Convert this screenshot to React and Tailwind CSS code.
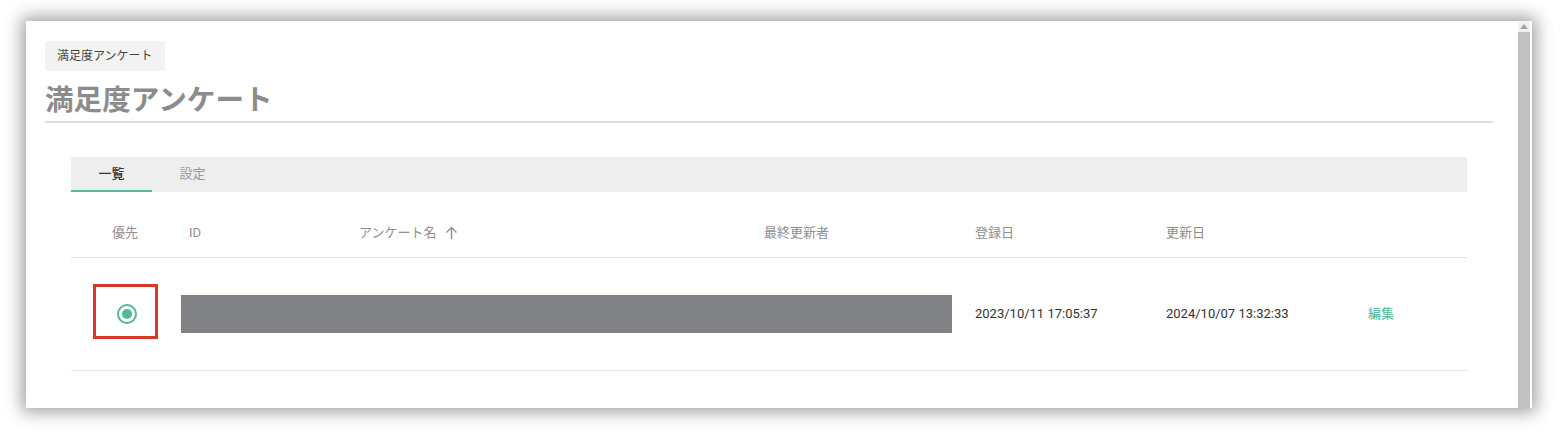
import React from "react";

export default function App() {
  return (
    <div
      className="w-[1562px] h-[436px] bg-white pt-[21px] pl-[26px] overflow-hidden font-['Roboto','Noto_Sans_CJK_JP',sans-serif]"
    >
      <div className="w-[1506px] h-[387px] bg-white flex shadow-[0_0_16px_4px_rgba(0,0,0,0.38)]">
        {/* content */}
        <div className="flex-1 pl-[19px] pr-[25px] pt-[20px]">
          <div className="inline-flex items-center h-[30px] px-[12px] rounded-[4px] bg-[#f3f3f3] text-[12px] text-[#444]">
            満足度アンケート
          </div>
          <div className="mt-[9px] h-[43px] leading-[40px] text-[28.6px] font-bold text-[#8c8c8c] border-b-2 border-[#dddddd]">
            満足度アンケート
          </div>

          <div className="mx-[26px] mt-[34px]">
            {/* tabs */}
            <div className="flex h-[35px] bg-[#eeeeee]">
              <div className="w-[81px] flex items-center justify-center text-[13px] font-medium text-[#333] border-b-2 border-[#5ab9a3]">
                一覧
              </div>
              <div className="w-[81px] flex items-center justify-center text-[13px] text-[#9a9a9a] pb-[2px]">
                設定
              </div>
            </div>

            {/* header */}
            <div className="mt-[17px] flex h-[49px] items-center text-[13px] text-[#8f8f8f] border-b border-[#e2e2e2]">
              <div className="w-[110px] flex justify-center pr-[2px]">優先</div>
              <div className="w-[170px] pl-[8px]">ID</div>
              <div className="w-[405px] pl-[8px] flex items-center gap-[9px]">
                アンケート名
                <svg width="13" height="14" viewBox="0 0 13 14" fill="none" stroke="#8f8f8f" strokeWidth="1.4">
                  <path d="M6.5 13V1.5M1.5 6.5L6.5 1.5L11.5 6.5" />
                </svg>
              </div>
              <div className="w-[211px] pl-[8px]">最終更新者</div>
              <div className="w-[191px] pl-[8px]">登録日</div>
              <div className="w-[202px] pl-[8px]">更新日</div>
              <div className="flex-1 pl-[8px]"></div>
            </div>

            {/* row */}
            <div className="flex h-[113px] items-center text-[13px] text-[#333] border-b border-[#e6e6e6]">
              <div className="w-[110px] flex justify-center relative">
                <div className="w-[20px] h-[20px] rounded-full border-2 border-[#52b993] flex items-center justify-center ml-[2px]">
                  <div className="w-[10px] h-[10px] rounded-full bg-[#52b993]"></div>
                </div>
                <div className="absolute left-[22px] top-[-20px] w-[65px] h-[55px] border-[3px] border-[#d8382c]"></div>
              </div>
              <div className="w-[786px] flex items-center">
                <div className="w-[771px] h-[38px] bg-[#808185]"></div>
              </div>
              <div className="w-[191px] pl-[8px]">2023/10/11 17:05:37</div>
              <div className="w-[202px] pl-[8px]">2024/10/07 13:32:33</div>
              <div className="flex-1 pl-[8px] text-[#4fb29b]">編集</div>
            </div>
          </div>
        </div>

        {/* scrollbar */}
        <div className="w-[14px] flex flex-col border-r-2 border-white">
          <div className="h-[11px] bg-[#f1f1f1] flex items-center justify-center">
            <svg width="8" height="5" viewBox="0 0 8 5">
              <path d="M0 5L4 0L8 5Z" fill="#a3a3a3" />
            </svg>
          </div>
          <div className="flex-1 bg-[#c1c1c1]"></div>
        </div>
      </div>
    </div>
  );
}
